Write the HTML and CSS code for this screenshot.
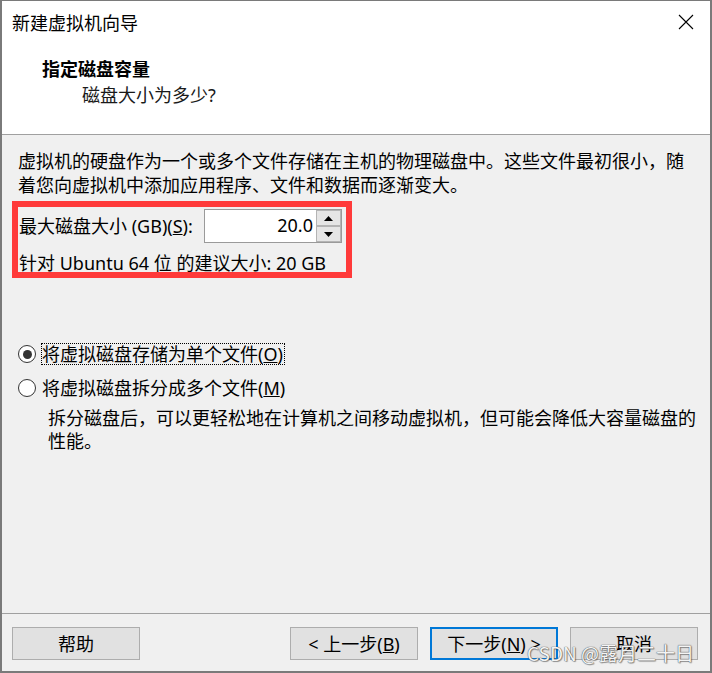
FILE: index.html
```html
<!DOCTYPE html>
<html lang="zh-CN">
<head>
<meta charset="utf-8">
<title>新建虚拟机向导</title>
<link rel="stylesheet" href="styles.css">
</head>
<body>
<div class="window">
  <header class="titlebar">
    <span class="title">新建虚拟机向导</span>
    <svg class="close" width="16" height="16" viewBox="0 0 16 16" aria-hidden="true">
      <path d="M1 1L15 15M15 1L1 15" stroke="#000" stroke-width="1.1" fill="none"/>
    </svg>
  </header>
  <section class="banner">
    <div class="banner-title">指定磁盘容量</div>
    <div class="banner-sub">磁盘大小为多少?</div>
  </section>
  <main class="content">
    <p class="intro">虚拟机的硬盘作为一个或多个文件存储在主机的物理磁盘中。这些文件最初很小，随<br>着您向虚拟机中添加应用程序、文件和数据而逐渐变大。</p>
    <div class="highlight">
      <div class="size-row">
        <span class="label">最大磁盘大小 (GB)(<u>S</u>):</span>
        <div class="spin">
          <div class="spin-value">20.0</div>
          <div class="spin-btns">
            <div class="spin-btn"><svg width="9" height="5" viewBox="0 0 9 5"><path d="M0 5L4.5 0L9 5Z" fill="#000"/></svg></div>
            <div class="spin-btn"><svg width="9" height="5" viewBox="0 0 9 5"><path d="M0 0L9 0L4.5 5Z" fill="#000"/></svg></div>
          </div>
        </div>
      </div>
      <div class="recommend">针对 Ubuntu 64 位 的建议大小: 20 GB</div>
    </div>
    <div class="options">
      <div class="radio-row">
        <span class="radio checked"></span>
        <span class="radio-label focus">将虚拟磁盘存储为单个文件(<u>O</u>)</span>
      </div>
      <div class="radio-row second">
        <span class="radio"></span>
        <span class="radio-label">将虚拟磁盘拆分成多个文件(<u>M</u>)</span>
      </div>
      <p class="desc">拆分磁盘后，可以更轻松地在计算机之间移动虚拟机，但可能会降低大容量磁盘的<br>性能。</p>
    </div>
  </main>
  <footer class="footer">
    <button class="btn">帮助</button>
    <div class="spacer"></div>
    <button class="btn">&lt; 上一步(<u>B</u>)</button>
    <button class="btn default">下一步(<u>N</u>) &gt;</button>
    <button class="btn">取消</button>
  </footer>
  <div class="watermark">CSDN @露月二十日</div>
</div>
</body>
</html>
```

FILE: styles.css
```css
* { box-sizing: border-box; }

html, body {
  margin: 0;
  padding: 0;
  background: #f0f0f0;
}

body {
  font-family: "Noto Sans", "Noto Sans CJK SC", sans-serif;
  font-size: 18px;
  color: #000;
}

.window {
  position: relative;
  width: 712px;
  height: 673px;
  display: flex;
  flex-direction: column;
  border-style: solid;
  border-color: #7a7a7a;
  border-width: 1px 2px 2px 2px;
  background: #f0f0f0;
  overflow: hidden;
}

.titlebar {
  height: 42px;
  flex: none;
  display: flex;
  align-items: center;
  justify-content: space-between;
  background: #fff;
  padding: 0 16px 0 10px;
}

.title {
  font-family: "Noto Sans CJK SC", sans-serif;
  line-height: 24px;
}

.close { display: block; }

.banner {
  flex: none;
  background: #fff;
  padding: 13px 0 27px 0;
  border-bottom: 1px solid #a0a0a0;
}

.banner-title {
  padding-left: 40px;
  line-height: 24px;
  font-weight: bold;
  font-family: "Noto Sans CJK SC", sans-serif;
}

.banner-sub {
  margin-top: 3px;
  padding-left: 80px;
  line-height: 24px;
  color: #1a1a1a;
}

.content {
  flex: 1;
  padding: 14px 0 0 16px;
}

.intro {
  margin: 0;
  line-height: 24px;
}

.highlight {
  margin: 4px 0 0 -6px;
  width: 340px;
  height: 77px;
  border: 6px solid #ff3a3a;
  padding: 0 4px 0 1px;
}

.size-row {
  display: flex;
  align-items: center;
  justify-content: space-between;
  padding-top: 2px;
  height: 36px;
}

.label { line-height: 24px; }

.spin {
  width: 138px;
  height: 34px;
  display: flex;
  background: #fff;
  border: 1px solid #9a9a9a;
}

.spin-value {
  flex: 1;
  text-align: right;
  padding-right: 3px;
  line-height: 30px;
}

.spin-btns {
  width: 25px;
  display: flex;
  flex-direction: column;
}

.spin-btn {
  flex: 1;
  display: flex;
  align-items: center;
  justify-content: center;
  background: #e5e5e5;
  border: 1px solid #b4b4b4;
}

.spin-btn svg { display: block; }

.recommend {
  padding-top: 11px;
  line-height: 18px;
}

.options {
  margin-top: 65px;
}

.radio-row {
  display: flex;
  align-items: center;
  height: 22px;
}

.radio-row.second { margin-top: 12px; }

.radio {
  width: 18px;
  height: 18px;
  border: 1px solid #333;
  border-radius: 50%;
  background: #fff;
  display: flex;
  align-items: center;
  justify-content: center;
  flex: none;
}

.radio.checked::after {
  content: "";
  width: 9px;
  height: 9px;
  border-radius: 50%;
  background: #333;
}

.radio-label {
  margin-left: 5px;
  line-height: 20px;
  border: 1px dotted transparent;
  padding: 0 1px 0 0;
}

.radio-label.focus { border-color: #000; }

.desc {
  margin: 8px 0 0 30px;
  line-height: 23px;
}

.footer {
  height: 58px;
  flex: none;
  border-top: 1px solid #a0a0a0;
  display: flex;
  align-items: flex-start;
  gap: 12px;
  padding: 13px 12px 0 10px;
}

.spacer { flex: 1; }

.btn {
  width: 128px;
  height: 33px;
  font: inherit;
  font-size: 18px;
  color: #000;
  background: #e1e1e1;
  border: 1px solid #adadad;
  padding: 0;
  line-height: 24px;
}

.btn.default {
  border: 2px solid #0078d7;
}

.watermark {
  position: absolute;
  left: 525px;
  top: 640px;
  font-family: "Noto Sans CJK SC", sans-serif;
  font-size: 19px;
  line-height: 24px;
  color: #f4f4f4;
  text-shadow: 0 0 1px #555, 0 0 1px #555, 1px 1px 1px rgba(0,0,0,0.35);
  white-space: nowrap;
}
```
